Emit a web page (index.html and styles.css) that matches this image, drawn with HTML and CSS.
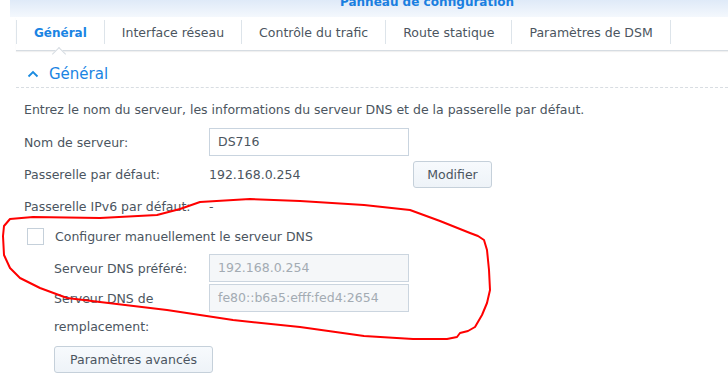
FILE: index.html
```html
<!DOCTYPE html>
<html lang="fr">
<head>
<meta charset="utf-8">
<title>Panneau de configuration</title>
<link rel="stylesheet" href="styles.css">
</head>
<body>
<div class="window">
  <div class="titlebar"><span class="title">Panneau de configuration</span></div>
  <div class="tabs">
    <div class="tab active">Général</div>
    <div class="tab">Interface réseau</div>
    <div class="tab">Contrôle du trafic</div>
    <div class="tab">Route statique</div>
    <div class="tab">Paramètres de DSM</div>
  </div>
  <div class="content">
    <div class="section-head">
      <svg class="chevron" width="12" height="8" viewBox="0 0 12 8"><path d="M1.5 6.5 L6 2 L10.5 6.5" fill="none" stroke="#1a8be0" stroke-width="1.8"/></svg>
      <span>Général</span>
    </div>
    <div class="form">
      <p class="desc">Entrez le nom du serveur, les informations du serveur DNS et de la passerelle par défaut.</p>
      <div class="row">
        <label class="lbl">Nom de serveur:</label>
        <div class="field">DS716</div>
      </div>
      <div class="row">
        <label class="lbl">Passerelle par défaut:</label>
        <span class="val">192.168.0.254</span>
        <button class="btn btn-mod">Modifier</button>
      </div>
      <div class="row">
        <label class="lbl">Passerelle IPv6 par défaut:</label>
        <span class="val">-</span>
      </div>
      <div class="check-row">
        <span class="checkbox"></span>
        <span>Configurer manuellement le serveur DNS</span>
      </div>
      <div class="sub">
        <div class="row row-first">
          <label class="lbl sublbl">Serveur DNS préféré:</label>
          <div class="field disabled">192.168.0.254</div>
        </div>
        <div class="row row-top">
          <label class="lbl sublbl wrap">Serveur DNS de remplacement:</label>
          <div class="field disabled">fe80::b6a5:efff:fed4:2654</div>
        </div>
        <button class="btn btn-adv">Paramètres avancés</button>
      </div>
    </div>
  </div>
  <svg class="annot" width="728" height="383" viewBox="0 0 728 383">
    <polyline fill="none" stroke="#ff0000" stroke-width="2" stroke-linejoin="round" stroke-linecap="round"
      points="3,236 4,226 10,219 33,217 100,218 157,215 180,209 200,202 250,199 300,201 364,205 410,210 440,221 470,233 478,236 484,240 487,250 489,270 490,290 487,303 482,315 475,327 468,331 460,333 457,337 447,339 413,339 364,336 300,327 233,320 167,310 100,302 67,298 40,288 20,278 10,268 4,255 3,236"/>
  </svg>
</div>
</body>
</html>
```
FILE: styles.css
```css
html, body {
  margin: 0;
  padding: 0;
  background: #ffffff;
}
body {
  width: 728px;
  height: 383px;
  overflow: hidden;
  font-family: "DejaVu Sans", Verdana, sans-serif;
  font-size: 12.5px;
  color: #4b5560;
}
.window {
  position: relative;
  margin-left: 10px;
  height: 383px;
  background: linear-gradient(to bottom, #dfeaf8 0px, #f4f8fd 17px, #ffffff 17px);
}
.titlebar {
  height: 17px;
  overflow: hidden;
  position: relative;
}
.title {
  display: block;
  margin-top: -8px;
  padding-left: 330px;
  font-weight: bold;
  font-size: 12px;
  line-height: 20px;
  color: #1a7fe0;
}
.tabs {
  margin-left: 6px;
  height: 33px;
  display: flex;
  align-items: flex-start;
  border-bottom: 1px solid #d6dce2;
  box-shadow: 0 1px 1px rgba(0,0,0,0.06);
  position: relative;
  font-size: 12.5px;
}
.tab {
  margin-top: 3px;
  height: 24px;
  line-height: 26px;
  padding: 0 17px;
  border-right: 1px solid #dde4ea;
  white-space: nowrap;
  color: #4b5560;
  position: relative;
}
.tab.active {
  border-left: 1px solid #dde4ea;
  color: #1a84e3;
  font-weight: bold;
  font-size: 12px;
}
.tab.active::after {
  content: "";
  position: absolute;
  left: 37px;
  top: 29px;
  width: 9px;
  height: 9px;
  background: #ffffff;
  border-left: 1px solid #d6dce2;
  border-top: 1px solid #d6dce2;
  transform: rotate(45deg);
}
.content {
  padding-left: 6px;
}
.section-head {
  margin-top: 11px;
  height: 23px;
  padding-bottom: 2px;
  display: flex;
  align-items: center;
  border-bottom: 1px dashed #d8dde2;
  font-size: 15px;
  color: #1a84e3;
}
.chevron {
  margin-left: 11px;
  margin-right: 10px;
}
.form {
  padding-left: 8px;
}
.desc {
  margin: 0;
  padding-top: 13px;
  height: 25px;
  line-height: 18px;
}
.row {
  display: flex;
  align-items: center;
  min-height: 32px;
}
.lbl {
  width: 185px;
  flex: none;
}
.sublbl {
  width: 155px;
}
.field {
  width: 190px;
  height: 26px;
  line-height: 26px;
  border: 1px solid #c9d4df;
  padding-left: 8px;
  color: #4b5560;
  background: #ffffff;
}
.field.disabled {
  background: #f5f7f9;
  color: #a3abb3;
  border-color: #cbd5df;
}
.val {
  width: 204px;
  flex: none;
}
.btn {
  font-family: inherit;
  font-size: 12.5px;
  color: #4b5560;
  background: linear-gradient(to bottom, #f7fafd, #eef3f8);
  border: 1px solid #c5d0da;
  border-radius: 3px;
  height: 27px;
  padding: 0 12px;
}
.btn-mod {
  width: 79px;
}
.check-row {
  display: flex;
  align-items: center;
  height: 30px;
  margin-top: -1px;
}
.checkbox {
  width: 15px;
  height: 15px;
  border: 1px solid #c5d0da;
  background: #ffffff;
  margin-left: 3px;
  margin-right: 11px;
}
.sub {
  padding-left: 30px;
}
.row-first {
  margin-top: 1px;
}
.row-top {
  align-items: flex-start;
}
.wrap {
  line-height: 28px;
  margin-top: 1px;
}
.btn-adv {
  margin-top: 5px;
  width: 159px;
}
.annot {
  position: absolute;
  left: -10px;
  top: 0;
  pointer-events: none;
}
```
